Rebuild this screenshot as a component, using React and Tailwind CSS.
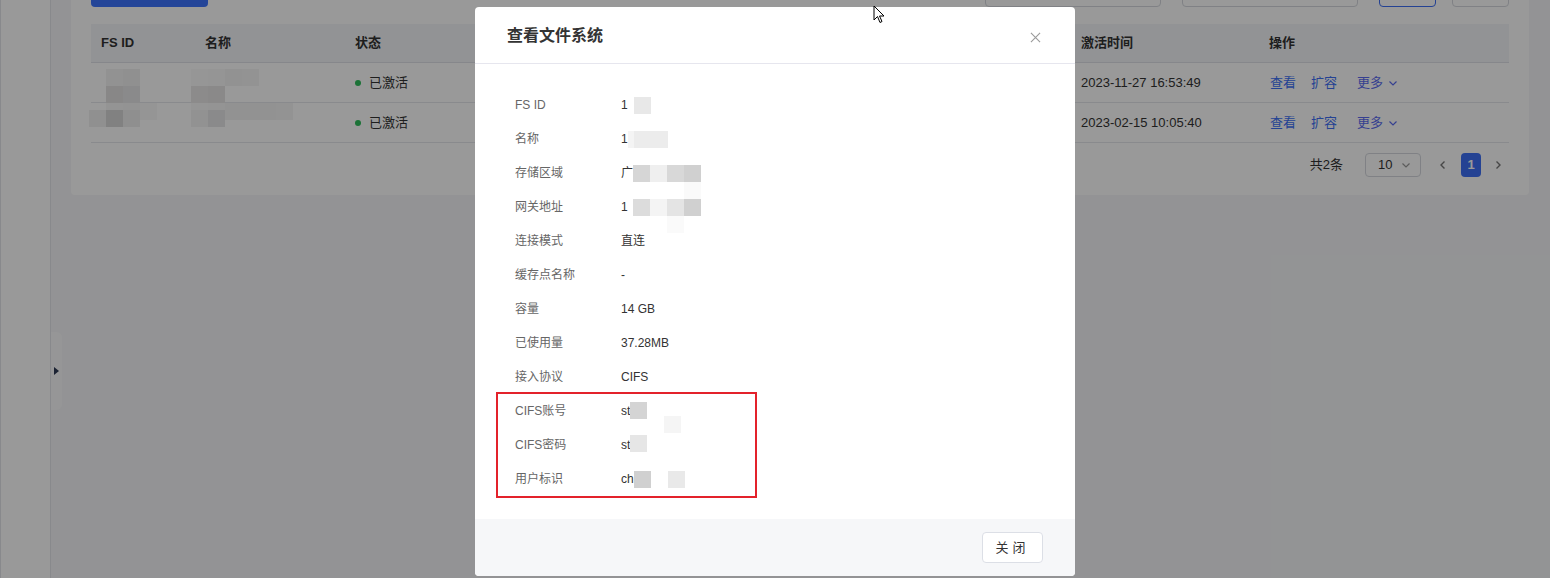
import React from "react";

const FONT = { fontFamily: '"Liberation Sans", "Noto Sans CJK SC", sans-serif' };

function Blk({ c, w = "w-[17px]", dy = "" }) {
  return <span className={`inline-block h-[17px] ${w} ${dy}`} style={{ background: c }} />;
}

function Chevron({ className = "" }) {
  return (
    <svg viewBox="0 0 12 12" className={className} fill="none" stroke="currentColor" strokeWidth="1.2">
      <path d="M2.5 4.5 6 8l3.5-3.5" />
    </svg>
  );
}

function TableRow({ time, blur }) {
  return (
    <div className="grid h-[40px] grid-cols-[104px_150px_363px_363px_188px_1fr] items-center border-b border-[#e4e6eb] text-[13px] text-[#333]">
      <div className="relative h-full">{blur[0]}</div>
      <div className="relative h-full">{blur[1]}</div>
      <div className="flex items-center gap-2 pl-[10px]">
        <span className="h-[6px] w-[6px] rounded-full bg-[#2fbf5c]" />
        <span>已激活</span>
      </div>
      <div />
      <div className="pl-[10px]">{time}</div>
      <div className="flex items-center pl-[11px] text-[#3d6ff5]">
        <span>查看</span>
        <span className="ml-[15px]">扩容</span>
        <span className="ml-[20px] flex items-center gap-1 text-[#5b6cf0]">
          更多
          <Chevron className="h-3 w-3" />
        </span>
      </div>
    </div>
  );
}

function Field({ label, children }) {
  return (
    <div className="flex h-[34px] items-center text-[12px]">
      <div className="w-[106px] text-[#666]">{label}</div>
      <div className="flex items-center text-[#333]">{children}</div>
    </div>
  );
}

export default function App() {
  return (
    <div className="relative flex h-[578px] w-full overflow-hidden bg-[#f5f6f9]" style={FONT}>
      {/* sidebar */}
      <div className="w-[51px] shrink-0 border-r border-l border-[#e3e5ea] bg-white" />
      {/* collapse tab */}
      <div className="shrink-0 pt-[332px]">
        <div className="flex h-[78px] w-[11px] items-center justify-center rounded-r-md bg-[#fbfbfc]">
          <span className="h-0 w-0 border-y-[4px] border-l-[5px] border-y-transparent border-l-[#2d3a55]" />
        </div>
      </div>

      {/* main */}
      <div className="flex-1 pl-[9px] pr-[21px]">
        <div className="rounded-b bg-white px-5 pb-[18px]">
          {/* toolbar */}
          <div className="-mt-[25px] flex h-8 items-center">
            <div className="h-8 w-[117px] rounded bg-[#3d74fd]" />
            <div className="flex-1" />
            <div className="h-8 w-[176px] rounded border border-[#d5d8de] bg-white" />
            <div className="ml-[21px] h-8 w-[176px] rounded border border-[#d5d8de] bg-white" />
            <div className="ml-[21px] h-8 w-[57px] rounded border border-[#3d6ff5] bg-white" />
            <div className="ml-4 h-8 w-[57px] rounded border border-[#d5d8de] bg-white" />
          </div>

          {/* table */}
          <div className="mt-[17px]">
            <div className="grid h-[39px] grid-cols-[104px_150px_363px_363px_188px_1fr] items-center border-b border-[#dfe2e8] bg-[#f4f5f8] text-[13px] font-bold text-[#333]">
              <div className="pl-[10px]">FS ID</div>
              <div className="pl-[10px]">名称</div>
              <div className="pl-[10px]">状态</div>
              <div />
              <div className="pl-[10px]">激活时间</div>
              <div className="pl-[10px]">操作</div>
            </div>
            <TableRow
              time="2023-11-27 16:53:49"
              blur={[
                <div className="absolute left-[15px] top-[6px] flex flex-col">
                  <div className="flex">
                    <Blk c="#f3f3f3" />
                    <Blk c="#f0f0f1" />
                  </div>
                  <div className="flex">
                    <Blk c="#e3e2e2" />
                    <Blk c="#e6e6e8" />
                  </div>
                  <div className="flex">
                    <Blk c="#f7f7f7" />
                    <Blk c="#f5f5f5" />
                    <Blk c="#f9f9f9" />
                  </div>
                </div>,
                <div className="absolute left-[-4px] top-[6px] flex flex-col">
                  <div className="flex">
                    <Blk c="#fbfbfb" />
                    <Blk c="#f8f8f8" />
                    <Blk c="#f3f3f3" />
                    <Blk c="#f6f6f6" />
                  </div>
                  <div className="flex">
                    <Blk c="#e9e8e8" />
                    <Blk c="#e6e4e4" />
                  </div>
                  <div className="flex">
                    <Blk c="#f8f8f8" />
                    <Blk c="#f7f7f7" />
                    <Blk c="#f4f4f4" />
                    <Blk c="#f4f4f4" />
                    <Blk c="#f3f3f3" />
                    <Blk c="#f6f6f6" />
                  </div>
                </div>,
              ]}
            />
            <TableRow
              time="2023-02-15 10:05:40"
              blur={[
                <div className="absolute left-[-2px] top-[7px] flex">
                  <Blk c="#f1f1f1" />
                  <Blk c="#d8d8d7" />
                  <Blk c="#eeeeee" />
                </div>,
                <div className="absolute left-[-4px] top-[7px] flex">
                  <Blk c="#f3f3f3" />
                  <Blk c="#e6e6e8" />
                </div>,
              ]}
            />
          </div>

          {/* pagination */}
          <div className="mt-[10px] flex h-6 items-center justify-end pr-[5px] text-[13px] text-[#333]">
            <span>共2条</span>
            <div className="ml-[22px] flex h-6 w-[56px] items-center justify-between rounded border border-[#d5d8de] pl-[12px] pr-[8px]">
              <span>10</span>
              <Chevron className="h-3 w-3 text-[#999]" />
            </div>
            <svg viewBox="0 0 12 12" className="ml-4 h-3 w-3 text-[#777]" fill="none" stroke="currentColor" strokeWidth="1.4">
              <path d="M7.5 2.5 4 6l3.5 3.5" />
            </svg>
            <div className="ml-[12px] flex h-6 w-5 items-center justify-center rounded-sm bg-[#3d6ff5] font-bold text-white">1</div>
            <svg viewBox="0 0 12 12" className="ml-[11px] h-3 w-3 text-[#777]" fill="none" stroke="currentColor" strokeWidth="1.4">
              <path d="M4.5 2.5 8 6l-3.5 3.5" />
            </svg>
          </div>
        </div>
      </div>

      {/* mask + modal */}
      <div className="absolute inset-0 flex justify-center bg-black/40 pt-[7px]">
        <div className="h-[569px] w-[600px] overflow-hidden rounded-sm bg-white" style={FONT}>
          <div className="flex h-[57px] items-center justify-between border-b border-[#e6e6ee] pl-8 pr-[34px]">
            <span className="pb-[2px] text-[16px] font-bold text-[#333]" style={{ fontFamily: '"Noto Sans CJK SC", sans-serif' }}>
              查看文件系统
            </span>
            <svg viewBox="0 0 12 12" className="mt-1 h-[11px] w-[11px] text-[#9a9a9a]" fill="none" stroke="currentColor" strokeWidth="1.2">
              <path d="M1 1l10 10M11 1 1 11" />
            </svg>
          </div>

          <div className="h-[455px] pl-10 pt-[24px]">
            <Field label="FS ID">
              1<span className="ml-[6px] inline-block h-[17px] w-[17px] bg-[#e8e8e8]" />
            </Field>
            <Field label="名称">
              1<span className="inline-block h-[17px] w-[6px] bg-[#f4f4f4]" />
              <span className="inline-block h-[17px] w-[34px] bg-[#ececec]" />
            </Field>
            <Field label="存储区域">
              广
              <span className="relative flex">
                <Blk c="#d6d6d6" />
                <Blk c="#efefef" />
                <Blk c="#d8d8d8" />
                <Blk c="#d0d0d0" />
                <span className="absolute left-[51px] top-[17px] h-[17px] w-[17px] bg-[#fafafa]" />
              </span>
            </Field>
            <Field label="网关地址">
              1<span className="ml-[5px] relative flex">
                <Blk c="#dcdcdc" />
                <Blk c="#f4f4f4" />
                <Blk c="#e4e4e4" />
                <Blk c="#d0d0d0" />
                <span className="absolute left-[34px] top-[17px] h-[17px] w-[17px] bg-[#fafafa]" />
              </span>
            </Field>
            <Field label="连接模式">直连</Field>
            <Field label="缓存点名称">-</Field>
            <Field label="容量">14 GB</Field>
            <Field label="已使用量">37.28MB</Field>
            <Field label="接入协议">CIFS</Field>
            <div className="relative">
              <span className="pointer-events-none absolute -left-[19px] -top-[2px] h-[106px] w-[261px] border-2 border-[#e3222b]" />
              <Field label="CIFS账号">
                st<span className="relative -mt-[1px] inline-block h-[17px] w-[17px] bg-[#d4d4d4]">
                  <span className="absolute left-[34px] top-[14px] h-[17px] w-[17px] bg-[#f5f5f5]" />
                </span>
              </Field>
              <Field label="CIFS密码">
                st<span className="-mt-[4px] inline-block h-[17px] w-[17px] bg-[#e6e6e6]" />
              </Field>
              <Field label="用户标识">
                ch<span className="inline-block h-[17px] w-[17px] bg-[#d0d0d0]" />
                <span className="ml-[17px] inline-block h-[17px] w-[17px] bg-[#e9e9e9]" />
              </Field>
            </div>
          </div>

          <div className="flex h-[57px] items-center justify-end bg-[#f6f7f9] pr-8">
            <button
              type="button"
              className="h-[31px] w-[61px] rounded-sm border border-[#dcdfe6] bg-white text-[13px] tracking-[4px] text-[#333]"
            >
              关闭
            </button>
          </div>
        </div>
      </div>

      {/* mouse cursor */}
      <svg viewBox="0 0 12 19" className="absolute left-[873px] top-[5px] h-[19px] w-[12px]">
        <path d="M1 1v14l3.5-3.5 2.5 6 2-1-2.5-5.5H11z" fill="#fff" stroke="#000" strokeWidth="1" strokeLinejoin="round" />
      </svg>
    </div>
  );
}
